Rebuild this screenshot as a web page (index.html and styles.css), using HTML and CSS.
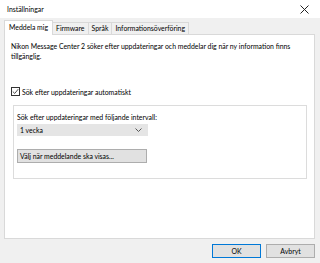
FILE: index.html
```html
<!DOCTYPE html>
<html lang="sv">
<head>
    <meta charset="UTF-8">
    <title>Inställningar</title>
    <link rel="stylesheet" href="styles.css">
</head>
<body>

<div class="dialog">
    <!-- titelrad -->
    <div class="titlebar">
        <span class="title">Inställningar</span>
        <span class="close">
            <svg width="9" height="9" viewBox="0 0 9 9"><path d="M0.5 0.5L8.5 8.5M8.5 0.5L0.5 8.5" stroke="#222" stroke-width="1"/></svg>
        </span>
    </div>

    <div class="content">
        <!-- flikar -->
        <div class="tabs">
            <div class="tab active">Meddela mig</div>
            <div class="tab">Firmware</div>
            <div class="tab">Språk</div>
            <div class="tab">Informationsöverföring</div>
        </div>

        <div class="panel">
            <p class="intro">Nikon Message Center 2 söker efter uppdateringar och meddelar dig när ny information finns tillgänglig.</p>

            <label class="check">
                <span class="box">
                    <svg width="9" height="9" viewBox="0 0 9 9"><path d="M1 4.5L3.5 7L8 1.5" fill="none" stroke="#333" stroke-width="1.1"/></svg>
                </span>
                Sök efter uppdateringar automatiskt
            </label>

            <div class="group">
                <div class="group-label">Sök efter uppdateringar med följande intervall:</div>
                <div class="select">
                    <span>1 vecka</span>
                    <svg width="7" height="4" viewBox="0 0 7 4"><path d="M0.5 0.5L3.5 3.5L6.5 0.5" fill="none" stroke="#555" stroke-width="1"/></svg>
                </div>
                <div class="btn wide">Välj när meddelande ska visas...</div>
            </div>
        </div>

        <!-- knappar -->
        <div class="footer">
            <div class="btn default">OK</div>
            <div class="btn">Avbryt</div>
        </div>
    </div>
</div>

</body>
</html>
```

FILE: styles.css
```css
body {
    margin: 0;
    padding: 0;
    font-family: Lato, "Noto Sans", sans-serif;
    font-size: 6.9px;
    color: #000;
    background-color: #f0f0f0;
}

.dialog {
    width: 320px;
    height: 263px;
    display: flex;
    flex-direction: column;
    overflow: hidden;
}

.titlebar {
    height: 18px;
    background-color: #fff;
    display: flex;
    align-items: center;
    justify-content: space-between;
    padding: 0 11px 0 7px;
}

.close {
    display: flex;
}

.content {
    flex-grow: 1;
    padding: 3px 5px 0 4px;
    display: flex;
    flex-direction: column;
}

.tabs {
    display: flex;
    align-items: flex-end;
    height: 13px;
    padding-left: 1px;
}

.tab {
    height: 11px;
    line-height: 11px;
    padding: 0 3px;
    border: 1px solid #d9d9d9;
    border-bottom: none;
    margin-left: -1px;
    background-color: #f0f0f0;
}

.tab.active {
    height: 14px;
    line-height: 13px;
    padding: 0 4px;
    background-color: #fff;
    position: relative;
    z-index: 1;
    margin-bottom: -1px;
}

.panel {
    height: 205px;
    background-color: #fff;
    border: 1px solid #d9d9d9;
    padding: 4px 8px 0 6px;
    box-sizing: border-box;
}

.intro {
    margin: 2px 0 0 0;
    line-height: 10px;
    width: 292px;
}

.check {
    display: flex;
    align-items: center;
    gap: 2px;
    margin-top: 26px;
}

.box {
    width: 9px;
    height: 9px;
    border: 1px solid #333;
    display: flex;
    box-sizing: border-box;
    align-items: center;
    justify-content: center;
}

.box svg {
    width: 7px;
    height: 7px;
}

.group {
    margin-top: 9px;
    margin-left: 2px;
    width: 294px;
    height: 74px;
    box-sizing: border-box;
    border: 1px solid #dcdcdc;
    padding: 6px 3px 0 3px;
}

.group-label {
    line-height: 10px;
}

.select {
    margin-top: 2px;
    width: 131px;
    height: 12px;
    box-sizing: border-box;
    background-color: #e5e5e5;
    border: 1px solid #e5e5e5;
    display: flex;
    align-items: center;
    justify-content: space-between;
    padding: 0 5px 0 2px;
}

.btn {
    height: 14px;
    box-sizing: border-box;
    background-color: #e1e1e1;
    border: 1px solid #adadad;
    display: flex;
    align-items: center;
    justify-content: center;
}

.btn.wide {
    margin-top: 13px;
    width: 130px;
    justify-content: flex-start;
    padding-left: 2px;
}

.footer {
    display: flex;
    justify-content: flex-end;
    gap: 5px;
    margin-top: 5px;
}

.footer .btn {
    width: 49px;
}

.btn.default {
    border-color: #0078d7;
}
```
